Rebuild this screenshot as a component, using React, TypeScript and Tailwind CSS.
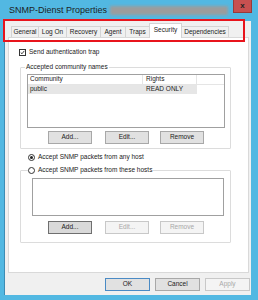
import React from "react";

const font = { fontFamily: '"Liberation Sans", Arial, sans-serif' };

function Btn({ label, w = "w-[44px]", variant = "normal" }: { label: string; w?: string; variant?: "normal" | "disabled" | "focus" | "default" }) {
  const cls =
    variant === "disabled"
      ? "bg-[#f4f4f4] border-[#c8c8c8] text-[#a8a8a8]"
      : variant === "focus"
      ? "bg-[#d9d9d9] border-[#6f6f6f] text-[#1a1a1a]"
      : variant === "default"
      ? "bg-[#e1e1e1] border-[#4a8ac4] text-[#1a1a1a]"
      : "bg-[#e1e1e1] border-[#a8a8a8] text-[#1a1a1a]";
  return (
    <div className={`${w} h-[13px] border flex items-center justify-center text-[6.5px] leading-none ${cls}`}>
      {label}
    </div>
  );
}

export default function App() {
  const tabs = [
    { t: "General", w: "w-[28px]" },
    { t: "Log On", w: "w-[29px]" },
    { t: "Recovery", w: "w-[35px]" },
    { t: "Agent", w: "w-[26px]" },
    { t: "Traps", w: "w-[25px]" },
  ];
  return (
    <div className="w-[258px] h-[300px] bg-[#52b8e2] relative overflow-hidden text-[#1a1a1a]" style={font}>
      {/* title bar */}
      <div className="h-[21px] flex items-start relative">
        <div className="pl-[9px] pt-[4px] text-[9px] leading-[12px] text-[#1e1e1e] whitespace-nowrap">SNMP-Dienst Properties</div>
        <div className="ml-[3px] mt-[6px] w-[118px] h-[9px] bg-[#9c9c9c] blur-[1.5px]" />
        <div className="ml-auto mr-[6px] w-[19px] h-[13px] bg-[#c75050] border border-[#9a3a3a] border-t-0 flex items-center justify-center text-[8px] font-bold leading-none text-[#222]">
          x
        </div>
      </div>
      {/* client */}
      <div className="ml-[4px] w-[247px] h-[274px] bg-[#f0f0f0] border-l border-[#3d8cb4] flex flex-col">
        {/* tabs */}
        <div className="h-[15px] flex items-end pl-[6px] mt-[1px]">
          {tabs.map((x) => (
            <div
              key={x.t}
              className={`${x.w} h-[11px] bg-[#f0f0f0] border border-b-0 border-[#d4d4d4] -mr-[1px] flex items-center justify-center text-[6.5px] leading-none`}
            >
              {x.t}
            </div>
          ))}
          <div className="w-[33px] h-[15px] bg-white border border-b-0 border-[#d4d4d4] -mr-[1px] relative z-10 flex items-center justify-center text-[6.5px] leading-none pb-[2px] -mb-[1px]">
            Security
          </div>
          <div className="w-[48px] h-[11px] bg-[#f0f0f0] border border-b-0 border-[#d4d4d4] flex items-center justify-center text-[6.5px] leading-none">
            Dependencies
          </div>
        </div>
        {/* panel */}
        <div className="ml-[3px] w-[241px] h-[236px] bg-white border border-[#d9d9d9] flex flex-col">
          <div className="flex items-center mt-[10px] ml-[10px] h-[8px]">
            <div className="w-[7px] h-[7px] border border-[#333] bg-white flex items-center justify-center">
              <svg width="7" height="7" viewBox="0 0 7 7">
                <path d="M1 3.5 L2.8 5.3 L6 1.2" stroke="#222" strokeWidth="1.2" fill="none" />
              </svg>
            </div>
            <span className="ml-[3px] text-[6.5px] leading-none">Send authentication trap</span>
          </div>
          {/* group 1 */}
          <div className="relative ml-[11px] mt-[11px] w-[211px] h-[82px] border border-[#dcdcdc] rounded-[1px] flex flex-col">
            <span className="absolute -top-[4px] left-[4px] bg-white px-[1px] text-[6.5px] leading-none">Accepted community names</span>
            <div className="ml-[6px] mt-[6px] w-[198px] h-[54px] border border-[#a0a0a0] bg-white flex flex-col">
              <div className="h-[10px] flex text-[6.5px] leading-none">
                <div className="w-[115px] border-r border-b border-[#e5e5e5] flex items-center pl-[2px]">Community</div>
                <div className="w-[54px] border-r border-b border-[#e5e5e5] flex items-center pl-[3px]">Rights</div>
                <div className="flex-1 border-b border-[#e5e5e5]" />
              </div>
              <div className="h-[9px] w-[169px] bg-[#e6e6e6] flex text-[6.5px] leading-none items-center">
                <div className="w-[115px] pl-[2px]">public</div>
                <div className="pl-[3px]">READ ONLY</div>
              </div>
            </div>
            <div className="flex mt-[3px]">
              <div className="ml-[27px]"><Btn label="Add..." /></div>
              <div className="ml-[13px]"><Btn label="Edit..." /></div>
              <div className="ml-[11px]"><Btn label="Remove" /></div>
            </div>
          </div>
          {/* radio 1 */}
          <div className="flex items-center ml-[19px] mt-[4px] h-[8px]">
            <div className="w-[7px] h-[7px] rounded-full border border-[#333] bg-white flex items-center justify-center">
              <div className="w-[3px] h-[3px] rounded-full bg-[#222]" />
            </div>
            <span className="ml-[3px] text-[6.5px] leading-none">Accept SNMP packets from any host</span>
          </div>
          {/* group 2 */}
          <div className="relative ml-[11px] mt-[9px] w-[211px] h-[73px] border border-[#dcdcdc] rounded-[1px] flex flex-col">
            <div className="absolute -top-[5px] left-[7px] bg-white pr-[1px] flex items-center h-[8px]">
              <div className="w-[7px] h-[7px] rounded-full border border-[#333] bg-white" />
              <span className="ml-[3px] text-[6.5px] leading-none">Accept SNMP packets from these hosts</span>
            </div>
            <div className="ml-[11px] mt-[7px] w-[192px] h-[38px] border border-[#a0a0a0] bg-white" />
            <div className="flex mt-[5px]">
              <div className="ml-[27px]"><Btn label="Add..." variant="focus" /></div>
              <div className="ml-[13px]"><Btn label="Edit..." variant="disabled" /></div>
              <div className="ml-[11px]"><Btn label="Remove" variant="disabled" /></div>
            </div>
          </div>
        </div>
        {/* bottom buttons */}
        <div className="flex justify-end mt-[5px] mr-[1px] gap-[5px]">
          <Btn label="OK" w="w-[45px]" variant="default" />
          <Btn label="Cancel" w="w-[45px]" />
          <Btn label="Apply" w="w-[45px]" variant="disabled" />
        </div>
      </div>
      {/* red annotation */}
      <div className="absolute left-[3px] top-[19px] w-[242px] h-[23px] border-2 border-[#e8141c] pointer-events-none" />
    </div>
  );
}
